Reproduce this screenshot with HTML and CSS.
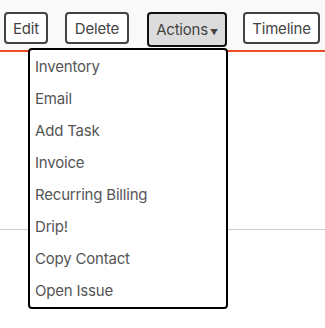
FILE: index.html
```html
<!DOCTYPE html>
<html lang="en">
<head>
  <meta charset="UTF-8">
  <meta name="viewport" content="width=device-width, initial-scale=1.0">
  <link rel="stylesheet" href="styles.css">
  <title>Contact</title>
</head>
<body>
  <div class="toolbar">
    <button class="btn btn-edit">Edit</button>
    <button class="btn btn-delete">Delete</button>
    <div class="menu-wrap">
      <button class="btn btn-open">Actions<span class="caret">&#9660;</span></button>
      <ul class="menu">
        <li>Inventory</li>
        <li>Email</li>
        <li>Add Task</li>
        <li>Invoice</li>
        <li>Recurring Billing</li>
        <li>Drip!</li>
        <li>Copy Contact</li>
        <li>Open Issue</li>
      </ul>
    </div>
    <button class="btn btn-timeline">Timeline</button>
  </div>
  <div class="content">
    <hr class="divider">
  </div>
</body>
</html>
```

FILE: styles.css
```css
body {
  margin: 0;
  font-family: Inter, "Liberation Sans", sans-serif;
  background: white;
}

.toolbar {
  display: flex;
  align-items: flex-start;
  gap: 17px;
  padding: 12px 0 0 4px;
  height: 38px;
  background: #f9f9f9;
  border-bottom: 2px solid #ef4b25;
  position: relative;
  z-index: 2;
}

.btn {
  font-family: inherit;
  font-size: 15px;
  color: #444;
  background: white;
  border: 2px solid #444;
  border-radius: 4px;
  height: 32px;
  padding: 0;
  letter-spacing: -0.2px;
}

.btn-edit {
  width: 44px;
}

.btn-delete {
  width: 64px;
}

.btn-timeline {
  width: 77px;
  margin-left: -1px;
}

.menu-wrap {
  position: relative;
  margin-left: 1px;
}

.btn-open {
  background: #dcdcdc;
  border-color: #111;
  height: 35px;
  width: 80px;
}

.caret {
  font-size: 8px;
  margin-left: 2px;
}

.menu {
  position: absolute;
  top: 36px;
  left: -119px;
  width: 196px;
  margin: 0;
  padding: 1px 0 0;
  list-style: none;
  background: white;
  border: 2px solid black;
  border-radius: 4px;
}

.menu li {
  height: 32px;
  line-height: 32px;
  padding-left: 5px;
  font-size: 15px;
  color: #555;
  letter-spacing: -0.2px;
}

.content {
  padding-top: 177px;
  height: 99px;
}

.divider {
  margin: 0;
  border: none;
  border-top: 1px solid #ccc;
}
```
